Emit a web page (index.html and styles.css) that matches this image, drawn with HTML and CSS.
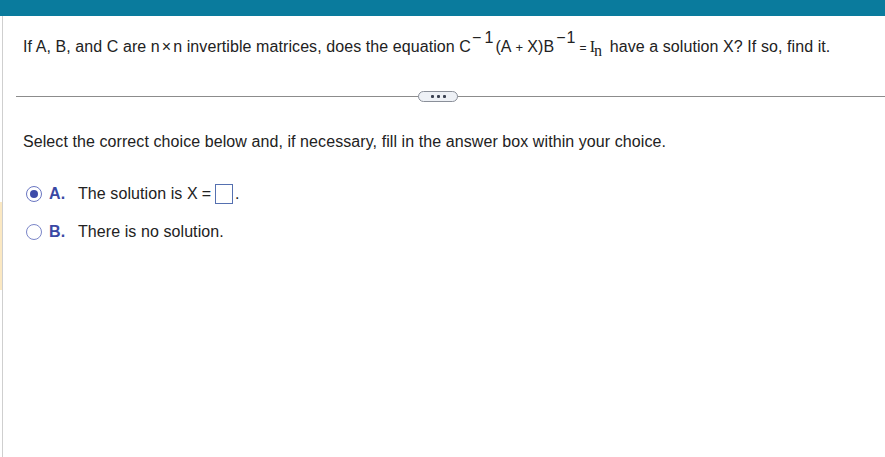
FILE: index.html
```html
<!DOCTYPE html>
<html>
<head>
<meta charset="utf-8">
<link rel="stylesheet" href="styles.css">
</head>
<body>
<div class="topbar"></div>
<div class="page">
  <div class="strip"></div>
  <div class="content">
    <p class="question">If A, B, and C are n<span class="times">×</span>n invertible matrices, does the equation C<sup class="exp"><span class="minus">−</span>1</sup>(A<span class="op">+</span>X)B<sup class="exp exp2"><span class="minus">−</span>1</sup><span class="eq">=</span><span class="serif">I<sub>n</sub></span> have a solution X? If so, find it.</p>
    <div class="divider">
      <span class="pill"><span class="dot"></span><span class="dot"></span><span class="dot"></span></span>
    </div>
    <p class="instr">Select the correct choice below and, if necessary, fill in the answer box within your choice.</p>
    <div class="choices">
      <div class="choice">
        <span class="radio checked"></span>
        <span class="letter">A.</span>
        <span class="text">The solution is X<span class="eq2">=</span><span class="box"></span>.</span>
      </div>
      <div class="choice">
        <span class="radio"></span>
        <span class="letter">B.</span>
        <span class="text">There is no solution.</span>
      </div>
    </div>
  </div>
</div>
</body>
</html>
```
FILE: styles.css
```css
html, body {
  margin: 0;
  padding: 0;
  background: #fff;
}
body {
  font-family: "Liberation Sans", Arial, sans-serif;
  color: #222;
  font-size: 16px;
  letter-spacing: 0.08px;
  width: 885px;
  height: 457px;
  overflow: hidden;
}
.topbar {
  height: 16px;
  background: #0a7b9d;
}
.page {
  position: relative;
  height: 441px;
  border-left: 1px solid #cfcfcf;
  margin-left: 2px;
}
.strip {
  position: absolute;
  left: -3px;
  top: 186px;
  width: 2px;
  height: 88px;
  background: #fbe8c2;
}
.content {
  padding: 0 0 0 20px;
}
.question {
  margin: 0;
  padding-top: 22px;
  line-height: 18px;
  white-space: nowrap;
}
.times {
  margin: 0 2px;
}
.exp {
  font-size: 16px;
  vertical-align: baseline;
  line-height: 0;
  margin-left: 1px;
  margin-right: 2px;
  display: inline-block;
  transform: translateY(-9px);
}
.exp .minus {
  margin-right: 3px;
}
.exp2 {
  margin-left: 2px;
  margin-right: 3px;
}
.exp2 .minus {
  margin-right: 1px;
}
.op {
  margin: 0 4px;
  font-size: 13px;
}
.eq {
  font-size: 12px;
  margin: 0 3px 0 1px;
}
.serif {
  font-family: "Liberation Serif", "Times New Roman", serif;
  font-size: 16px;
  margin-right: 3px;
}
.serif sub {
  font-size: 16px;
  vertical-align: baseline;
  position: relative;
  top: 4px;
  line-height: 0;
  margin-left: -1px;
}
.divider {
  position: relative;
  margin: 39px 0 0 -7px;
  height: 1px;
  background: #8c8c8c;
}
.pill {
  position: absolute;
  left: 402px;
  top: -5px;
  width: 40px;
  height: 11px;
  box-sizing: border-box;
  border: 1px solid #8a8f99;
  border-radius: 6px;
  background: #eef1f6;
  display: flex;
  align-items: center;
  justify-content: center;
  gap: 3px;
}
.dot {
  width: 3px;
  height: 3px;
  background: #3b4252;
  border-radius: 1px;
}
.instr {
  margin: 0;
  padding-top: 36px;
  line-height: 18px;
  white-space: nowrap;
}
.choices {
  padding-top: 33px;
  display: flex;
  flex-direction: column;
  gap: 18px;
}
.choice {
  display: flex;
  align-items: center;
  height: 20px;
}
.radio {
  width: 16px;
  height: 16px;
  box-sizing: border-box;
  border: 1.5px solid #7b86c8;
  border-radius: 50%;
  margin-left: 3px;
  display: flex;
  align-items: center;
  justify-content: center;
}
.radio.checked {
  border-color: #6a76c2;
}
.radio.checked::after {
  content: "";
  width: 8px;
  height: 8px;
  border-radius: 50%;
  background: #3e4ba8;
}
.letter {
  color: #3a48a4;
  font-weight: bold;
  margin-left: 7px;
  width: 29px;
}
.text {
  display: flex;
  align-items: center;
}
.eq2 {
  margin: 0 3px 0 4px;
}
.box {
  display: inline-block;
  width: 18px;
  height: 20px;
  box-sizing: border-box;
  border: 1px solid #5570b0;
  margin-left: 1px;
  margin-right: 2px;
}
```
